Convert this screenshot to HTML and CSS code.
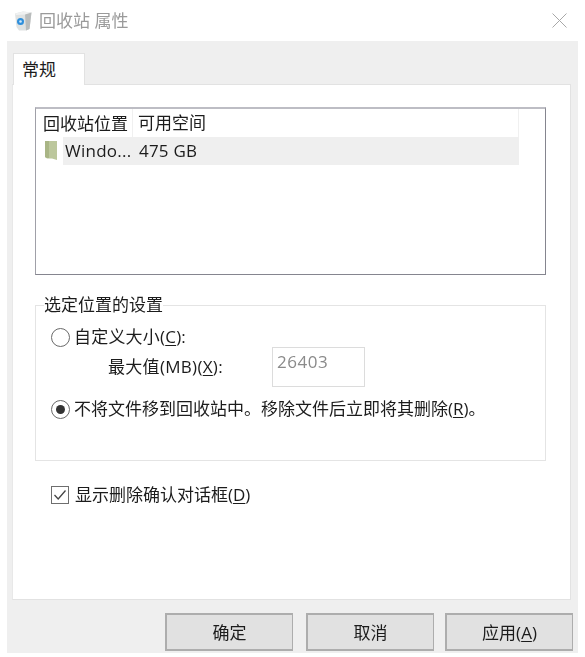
FILE: index.html
```html
<!DOCTYPE html>
<html lang="zh-CN">
<head>
<meta charset="utf-8">
<title>回收站 属性</title>
<link rel="stylesheet" href="styles.css">
</head>
<body>
<div class="dialog">
  <header class="titlebar">
    <svg class="bin-icon" width="18" height="20" viewBox="0 0 18 20">
      <path d="M1 2.500 L9 0.500 L17.500 1.500 L15.500 18 L12 19.500 L5 19.500 L2.500 16 Z" fill="#dfe2e2"/>
      <path d="M11 2.500 L17.500 1.500 L15.500 18 L12 19.500 Z" fill="#b9bcbc"/>
      <path d="M1 2.500 L9 0.500 L17.500 1.500 L11 3.500 L2 4 Z" fill="#f0f1f1"/>
      <circle cx="6.500" cy="10.500" r="3.500" fill="#2f8fdc"/>
      <circle cx="6.500" cy="10.500" r="1.300" fill="#cfe8fa"/>
    </svg>
    <span class="title">回收站 属性</span>
    <svg class="close-icon" width="15" height="15" viewBox="0 0 15 15">
      <path d="M0.500 0.500 L14.500 14.500 M14.500 0.500 L0.500 14.500" stroke="#a8a8a8" stroke-width="1" fill="none"/>
    </svg>
  </header>

  <main class="sheet">
    <div class="tabs"><div class="tab">常规</div></div>
    <section class="panel">
      <div class="listbox">
        <div class="list-head">
          <div class="col-a">回收站位置</div>
          <div class="col-b">可用空间</div>
        </div>
        <div class="list-row">
          <svg class="folder-icon" width="15" height="21" viewBox="0 0 15 21">
            <path d="M1 1 H13 V20 L8 18.500 H3 L1 17 Z" fill="#bcc79c"/>
            <path d="M1 1 H5 V18 H3 L1 17 Z" fill="#a9b585"/>
          </svg>
          <div class="row-sel">
            <div class="cell-name">Windo...</div>
            <div class="cell-size">475 GB</div>
          </div>
        </div>
      </div>

      <fieldset class="group">
        <legend class="group-label">选定位置的设置</legend>
        <label class="option opt-custom">
          <span class="radio"></span>
          <span class="wide-text">自定义大小(<u>C</u>):</span>
        </label>
        <div class="max-row">
          <span class="max-label">最大值(MB)(<u>X</u>):</span>
          <span class="max-input">26403</span>
        </div>
        <label class="option opt-none">
          <span class="radio radio-on"></span>
          <span>不将文件移到回收站中。移除文件后立即将其删除(<u>R</u>)。</span>
        </label>
      </fieldset>

      <label class="option opt-confirm">
        <svg class="check" width="18" height="18" viewBox="0 0 18 18">
          <rect x="0.500" y="0.500" width="17" height="17" fill="#fff" stroke="#6e6e6e"/>
          <path d="M3.500 9 L7.200 13 L14.500 4.500" fill="none" stroke="#444" stroke-width="1.300"/>
        </svg>
        <span>显示删除确认对话框(<u>D</u>)</span>
      </label>
    </section>
    <footer class="buttons">
      <button class="btn" type="button">确定</button>
      <button class="btn btn-middle" type="button">取消</button>
      <button class="btn" type="button">应用(<u>A</u>)</button>
    </footer>
  </main>
</div>
</body>
</html>
```
FILE: styles.css
```css
* { box-sizing: border-box; }
html, body { margin: 0; padding: 0; background: #fff; }
body {
  width: 585px;
  height: 657px;
  overflow: hidden;
  font-family: "Open Sans", "Noto Sans CJK SC", sans-serif;
  font-size: 17px;
  line-height: 24px;
  color: #1c1c1c;
}
u { text-underline-offset: 2px; }
.dialog { filter: blur(0.3px); }

.titlebar {
  height: 41px;
  display: flex;
  align-items: center;
  padding: 0 18px 0 14px;
}
.bin-icon { margin-right: 7px; }
.title { color: #9a9a9a; }
.close-icon { margin-left: auto; }

.sheet {
  margin: 0 7px;
  width: 571px;
  height: 612px;
  background: #efefef;
  padding: 12px 7px 0 5px;
}
.tabs { height: 31px; display: flex; padding-left: 1px; }
.tab {
  width: 72px;
  height: 32px;
  background: #fff;
  border: 1px solid #e2e2e2;
  border-bottom: 0;
  padding: 4px 0 0 8px;
  position: relative;
  z-index: 1;
}
.panel {
  width: 559px;
  height: 516px;
  background: #fff;
  border: 1px solid #e2e2e2;
  border-left-color: #e8e8e8;
  padding: 22px 25px 0 22px;
}

.listbox {
  width: 511px;
  height: 168px;
  border: 1px solid #85858f;
  border-top: 2px solid #bdbdc4;
  border-left: 1px solid #a0a0a8;
}
.list-head {
  width: 483px;
  height: 28px;
  display: flex;
  align-items: center;
  border-right: 1px solid #f0f0f0;
}
.col-a { width: 97px; height: 28px; padding-left: 7px; border-right: 1px solid #f0f0f0; line-height: 30px; white-space: nowrap; }
.col-b { padding-left: 5px; line-height: 30px; }
.list-row { display: flex; width: 483px; height: 28px; }
.folder-icon { margin: 3px 4px 0 8px; flex: none; }
.row-sel {
  flex: 1;
  display: flex;
  align-items: center;
  background: #efefef;
  padding-left: 2px;
}
.cell-name { width: 74px; white-space: nowrap; letter-spacing: 0.25px; }
.cell-size { white-space: nowrap; letter-spacing: 0.2px; }

.group {
  width: 511px;
  height: 168px;
  margin: 18px 0 0;
  padding: 0 0 0 15px;
  border: 1px solid #e4e4e4;
  min-inline-size: 0;
}
.group-label { padding: 0; margin-left: -7px; height: 24px; line-height: 24px; }

.option { display: flex; align-items: center; white-space: nowrap; }
.wide-text { letter-spacing: 0.2px; }
.radio {
  width: 19px;
  height: 19px;
  border: 1px solid #6a6a6a;
  border-radius: 50%;
  background: #fff;
  margin-right: 4px;
  flex: none;
  display: flex;
  align-items: center;
  justify-content: center;
}
.radio-on::after {
  content: "";
  width: 9px;
  height: 9px;
  border-radius: 50%;
  background: #333;
}
.opt-custom { height: 24px; margin-top: 8px; }
.max-row { display: flex; align-items: flex-start; height: 40px; padding-left: 57px; }
.max-label { margin-top: 6px; width: 164px; white-space: nowrap; letter-spacing: 0.3px; }
.max-input {
  width: 93px;
  height: 40px;
  margin-top: -2px;
  border: 1px solid #dcdcdc;
  padding: 2px 0 0 4px;
  color: #8a8a8a;
  letter-spacing: 0.5px;
}
.opt-none { height: 24px; margin-top: 8px; }

.opt-confirm { height: 24px; margin: 22px 0 0 16px; }
.check { margin-right: 6px; flex: none; }

.buttons {
  display: flex;
  justify-content: flex-end;
  gap: 12px;
  padding: 13px 0 0 0;
  margin-right: -2px;
}
.btn {
  width: 128px;
  height: 38px;
  background: #e1e1e1;
  border: 1px solid #adadad;
  border-width: 2px 1px 2px 2px;
  font: inherit;
  color: #1c1c1c;
  padding: 1px 0 0;
}
.btn-middle { margin: 0 -1px 0 1px; }
```
